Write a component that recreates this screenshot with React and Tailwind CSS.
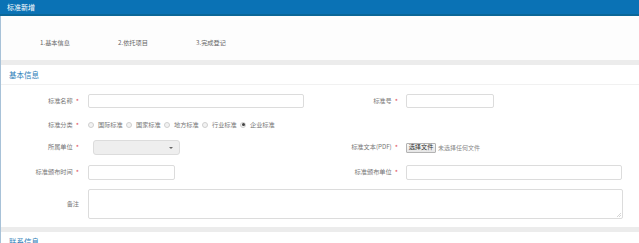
import React from 'react'

const cn = "font-['Noto_Sans_CJK_SC','Noto_Sans',sans-serif]";

function Label({ text, required = true }) {
	return (
		<div className="w-[80px] shrink-0 flex justify-end items-center text-[6.2px] text-[#777] leading-none pr-[2px]">
			<span>{text}</span>
			{required && <span className="text-[#e0505a] ml-[3px] text-[7px]">*</span>}
		</div>
	);
}

function Radio({ label, checked }) {
	return (
		<div className="flex items-center w-[38px] shrink-0">
			<span className="w-[6px] h-[6px] rounded-full border border-[#cfcfcf] bg-[#f2f2f2] flex items-center justify-center">
				{checked && <span className="w-[3px] h-[3px] rounded-full bg-[#444]" />}
			</span>
			<span className="ml-[4px] text-[6.2px] text-[#777] leading-none">{label}</span>
		</div>
	);
}

export default function App() {
	const kinds = ['国际标准', '国家标准', '地方标准', '行业标准', '企业标准'];

	return (
		<div className={`w-[639px] bg-white ${cn}`}>
			{/* 顶部标题 */}
			<div className="h-[16px] bg-[#0a72b5] border-b-[2px] border-[#0b6798] flex items-center px-[7px] shadow-[0_1px_0_#9fd3ee]">
				<span className="text-white text-[7px] leading-none">标准新增</span>
			</div>

			<div className="border-l border-[#a8c2d8]">
				{/* 步骤 */}
				<div className="h-[44px] bg-[#fdfdfd] flex items-center pt-[10px] pl-[39px] text-[6.2px] text-[#666] leading-none">
					<span className="w-[78px]">1.基本信息</span>
					<span className="w-[78px]">2.依托项目</span>
					<span>3.完成登记</span>
				</div>
				<div className="h-[5px] bg-[#ececec]" />

				{/* 基本信息 */}
				<div className="h-[20px] flex items-center pl-[8px] border-b border-[#f1f1f1]">
					<span className="text-[7.5px] text-[#2b7db8] leading-none">基本信息</span>
				</div>

				<div className="flex flex-col pb-[8px]">
					<div className="grid grid-cols-2 mt-[9px] h-[14px]">
						<div className="flex items-center">
							<Label text="标准名称" />
							<input className="ml-[7px] w-[216px] h-[14px] border border-[#dcdcdc] rounded-[2px] bg-white" />
						</div>
						<div className="flex items-center">
							<Label text="标准号" />
							<input className="ml-[6px] w-[88px] h-[14px] border border-[#dcdcdc] rounded-[2px] bg-white" />
						</div>
					</div>

					<div className="grid grid-cols-2 mt-[10px] h-[14px]">
						<div className="flex items-center">
							<Label text="标准分类" />
							<div className="ml-[7px] flex items-center">
								{kinds.map((k, i) => (
									<Radio key={k} label={k} checked={i === 4} />
								))}
							</div>
						</div>
						<div />
					</div>

					<div className="grid grid-cols-2 mt-[8px] h-[15px]">
						<div className="flex items-center">
							<Label text="所属单位" />
							<div className="ml-[12px] w-[87px] h-[15px] border border-[#dcdcdc] rounded-[3px] bg-[#eeeeee] flex items-center justify-end pr-[6px]">
								<span className="w-0 h-0 border-l-[2px] border-r-[2px] border-t-[2px] border-l-transparent border-r-transparent border-t-[#666]" />
							</div>
						</div>
						<div className="flex items-center">
							<Label text="标准文本(PDF)" />
							<div className="ml-[6px] flex items-center">
								<span className="h-[10px] w-[30px] border border-[#b3b3b3] rounded-[1px] bg-gradient-to-b from-[#f8f8f8] to-[#e6e6e6] text-[6.2px] text-[#333] leading-none flex items-center justify-center">选择文件</span>
								<span className="ml-[2px] text-[6px] text-[#888] leading-none">未选择任何文件</span>
							</div>
						</div>
					</div>

					<div className="grid grid-cols-2 mt-[10px] h-[15px]">
						<div className="flex items-center">
							<Label text="标准颁布时间" />
							<input className="ml-[7px] w-[87px] h-[15px] border border-[#dcdcdc] rounded-[2px] bg-white" />
						</div>
						<div className="flex items-center">
							<Label text="标准颁布单位" />
							<input className="ml-[6px] w-[216px] h-[15px] border border-[#dcdcdc] rounded-[2px] bg-white" />
						</div>
					</div>

					<div className="flex mt-[9px] h-[30px]">
						<div className="w-[80px] shrink-0 flex justify-end items-center text-[6.2px] text-[#777] leading-none pr-[2px]">备注</div>
						<div className="relative ml-[7px] w-[535px] h-[30px]">
							<textarea className="w-full h-full border border-[#dcdcdc] rounded-[2px] bg-white resize-none block" />
							<svg className="absolute right-[2px] bottom-[2px]" width="4" height="4" viewBox="0 0 4 4">
								<path d="M4 0 L0 4 M4 2 L2 4" stroke="#bbb" strokeWidth="0.6" />
							</svg>
						</div>
					</div>
				</div>

				<div className="h-[5px] bg-[#ececec]" />

				{/* 联系信息 */}
				<div className="h-[20px] flex items-center pl-[8px] border-b border-[#f1f1f1]">
					<span className="text-[7.5px] text-[#2b7db8] leading-none">联系信息</span>
				</div>
				<div className="h-[60px]" />
			</div>
		</div>
	)
}
